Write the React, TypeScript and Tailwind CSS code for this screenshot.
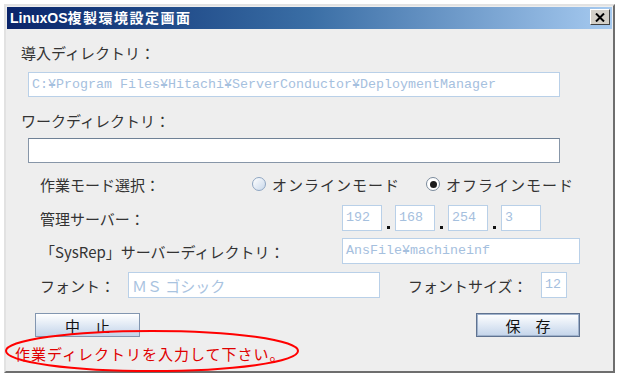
import React from 'react';

const JP = "font-['Noto_Sans_CJK_JP','Noto_Sans',sans-serif]";
const MONO = "font-['Liberation_Mono','Noto_Sans_CJK_JP',monospace]";

function Radio({ checked, label }: { checked?: boolean; label: string }) {
  return (
    <div className="flex items-center gap-[6px]">
      <span
        className={
          checked
            ? 'w-[14px] h-[14px] rounded-full border border-[#7a8a9c] bg-white flex items-center justify-center'
            : 'w-[14px] h-[14px] rounded-full border border-[#8fa6c2] bg-linear-to-br from-[#ffffff] to-[#c9d8ea]'
        }
      >
        {checked && <span className="w-[7px] h-[7px] rounded-full bg-[#1c1c1c]" />}
      </span>
      <span className={`${JP} text-[15px] tracking-[1px] text-[#333333] leading-none`}>{label}</span>
    </div>
  );
}

function DisabledField({ value, className }: { value: string; className: string }) {
  return (
    <div
      className={`${className} h-[26px] bg-white border border-[#b9d0e8] flex items-center px-[3px] ${MONO} text-[13.33px] text-[#a5c0de] leading-none whitespace-nowrap overflow-hidden`}
    >
      {value}
    </div>
  );
}

function IpDot() {
  return (
    <span className="w-[13px] h-[26px] flex items-end justify-center pb-[2px]">
      <span className="w-[3px] h-[3px] bg-[#111111]" />
    </span>
  );
}

export default function App() {
  return (
    <div className="w-[620px] h-[379px] bg-white pl-[4px] pt-[4px] relative overflow-hidden">
      <div className="w-[611px] h-[369px] border-2 border-t-[#e2e2e2] border-l-[#e2e2e2] border-r-[#6e6e6e] border-b-[#6e6e6e] p-px bg-[#eeeeee] flex flex-col">
        {/* title bar */}
        <div className="h-[22px] shrink-0 flex items-start justify-between pl-[3px] pr-[2px] pt-[2px] bg-linear-to-r from-[#0a246a] via-[#3a6ea5] to-[#a6caf0]">
          <span className="font-['Liberation_Sans','Noto_Sans_CJK_JP',sans-serif] font-bold text-white text-[14px] leading-[18px]">
            LinuxOS<span className="tracking-[1.5px]">複製環境設定画面</span>
          </span>
          <button className="w-[20px] h-[16px] bg-[#d4d0c8] border border-t-white border-l-white border-r-[#404040] border-b-[#404040] flex items-center justify-center">
            <svg width="10" height="9" viewBox="0 0 10 9">
              <path d="M1 0.5 L9 8.5 M9 0.5 L1 8.5" stroke="#000" strokeWidth="2" />
            </svg>
          </button>
        </div>

        {/* body */}
        <div className="flex-1 flex flex-col pt-[11px]">
          <div className={`ml-[14px] h-[24px] flex items-center ${JP} text-[15px] text-[#333333] leading-none`}>
            導入ディレクトリ：
          </div>
          <DisabledField
            className="ml-[21px] mt-[8px] w-[532px] !h-[25px]"
            value="C:¥Program Files¥Hitachi¥ServerConductor¥DeploymentManager"
          />

          <div className={`ml-[14px] mt-[11px] h-[24px] flex items-center ${JP} text-[15px] text-[#333333] leading-none`}>
            ワークディレクトリ：
          </div>
          <div className="ml-[21px] mt-[6px] w-[532px] h-[25px] bg-white border border-[#8796a8] border-t-[#6f8196]" />

          {/* mode */}
          <div className="ml-[33px] mt-[9px] h-[24px] flex items-center">
            <span className={`w-[212px] ${JP} text-[15px] text-[#333333] leading-none`}>作業モード選択：</span>
            <div className="w-[174px]">
              <Radio label="オンラインモード" />
            </div>
            <Radio checked label="オフラインモード" />
          </div>

          {/* server */}
          <div className="ml-[33px] mt-[9px] h-[26px] flex items-center">
            <span className={`w-[302px] ${JP} text-[15px] text-[#333333] leading-none`}>管理サーバー：</span>
            <DisabledField className="w-[40px]" value="192" />
            <IpDot />
            <DisabledField className="w-[40px]" value="168" />
            <IpDot />
            <DisabledField className="w-[40px]" value="254" />
            <IpDot />
            <DisabledField className="w-[40px]" value="3" />
          </div>

          {/* sysrep */}
          <div className="ml-[33px] mt-[7px] h-[26px] flex items-center">
            <span className={`w-[302px] ${JP} text-[15px] text-[#333333] leading-none`}>「SysRep」サーバーディレクトリ：</span>
            <DisabledField className="w-[238px]" value="AnsFile¥machineinf" />
          </div>

          {/* font */}
          <div className="ml-[33px] mt-[8px] h-[26px] flex items-center">
            <span className={`w-[88px] ${JP} text-[15px] text-[#333333] leading-none`}>フォント：</span>
            <div className={`w-[252px] h-[26px] bg-white border border-[#b9d0e8] flex items-center px-[3px] ${JP} text-[15px] text-[#a9c3df] leading-none`}>
              ＭＳ ゴシック
            </div>
            <span className={`ml-[28px] w-[133px] ${JP} text-[15px] text-[#333333] leading-none`}>フォントサイズ：</span>
            <DisabledField className="w-[26px]" value="12" />
          </div>

          {/* buttons */}
          <div className="ml-[28px] mr-[32px] mt-[15px] h-[24px] flex items-center justify-between">
            <button className={`w-[105px] h-[24px] border border-[#8296b0] bg-linear-to-b from-[#ffffff] to-[#c3d4ea] ${JP} text-[15px] text-[#111111] leading-none`}>
              中　止
            </button>
            <button className={`w-[104px] h-[24px] border border-[#5f7290] outline outline-1 -outline-offset-2 outline-[#9fb2cc] bg-linear-to-b from-[#ffffff] to-[#c3d4ea] ${JP} text-[15px] text-[#111111] leading-none`}>
              保　存
            </button>
          </div>

          {/* status */}
          <div className={`ml-[8px] mt-[6px] h-[20px] flex items-center ${JP} text-[15px] tracking-[1px] text-[#e00000] leading-none`}>
            作業ディレクトリを入力して下さい。
          </div>
        </div>
      </div>

      {/* annotation ellipse */}
      <svg className="absolute left-[3px] top-[329px]" width="298" height="44" viewBox="0 0 298 44">
        <ellipse cx="149" cy="22" rx="146" ry="20" fill="none" stroke="#ff0000" strokeWidth="2" />
      </svg>
    </div>
  );
}
